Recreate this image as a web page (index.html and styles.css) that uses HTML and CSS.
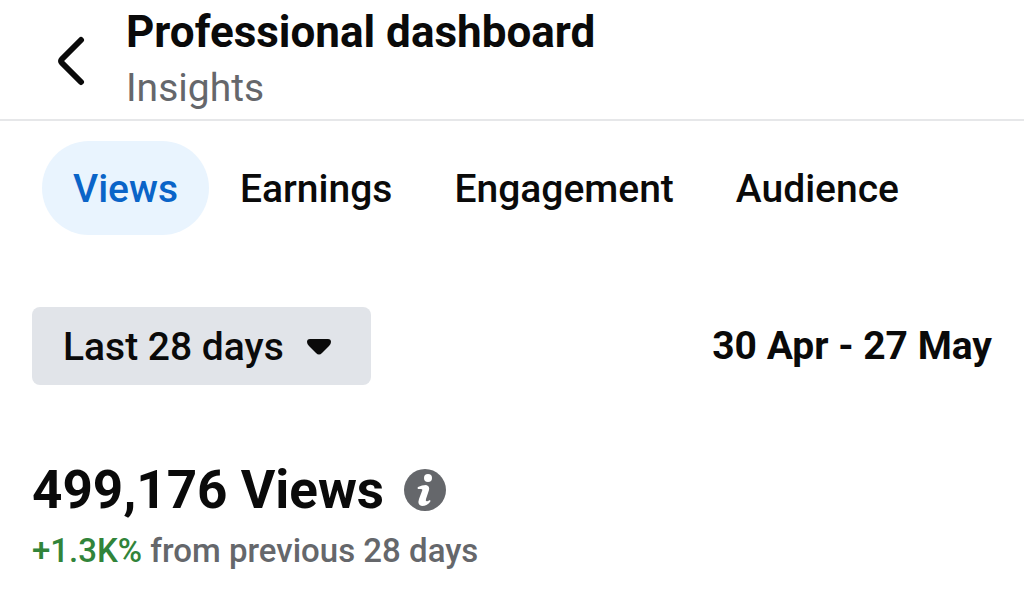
FILE: index.html
```
<!DOCTYPE html>
<html lang="en">
<head>
    <meta charset="UTF-8">
    <meta name="viewport" content="width=device-width, initial-scale=1.0">
    <title>Professional dashboard</title>
    <link rel="stylesheet" href="styles.css">
</head>
<body>
    <header class="header">
        <button class="back" aria-label="Back">
            <svg width="28" height="52" viewBox="0 0 28 52" fill="none" stroke="#0a0a0a" stroke-width="6" stroke-linecap="round" stroke-linejoin="round">
                <path d="M23 6 4 25q-2 2 0 4l19 19"/>
            </svg>
        </button>
        <div class="titles">
            <h1 class="title">Professional dashboard</h1>
            <p class="subtitle">Insights</p>
        </div>
    </header>

    <nav class="tabs">
        <button class="tab active">Views</button>
        <button class="tab">Earnings</button>
        <button class="tab">Engagement</button>
        <button class="tab">Audience</button>
    </nav>

    <main class="content">
        <div class="period">
            <button class="range">
                Last 28 days
                <svg width="24" height="16" viewBox="0 0 24 16" fill="#0a0a0a">
                    <path d="M3 0h18q3 0 3 3 0 2-2 4l-7 7q-3 3-6 0L2 7Q0 5 0 3q0-3 3-3z"/>
                </svg>
            </button>
            <span class="dates">30 Apr - 27 May</span>
        </div>

        <section class="summary">
            <div class="total">
                <h2 class="count">499,176 Views</h2>
                <button class="info" aria-label="About views">
                    <svg width="42" height="42" viewBox="0 0 42 42">
                        <circle cx="21" cy="21" r="21" fill="#65676b"/>
                        <circle cx="24" cy="9" r="4" fill="#fff"/>
                        <path d="M14 18q4-2 8-2 4 1 3 5l-3 9q-1 3 2 2l2-1q1 1 0 2-3 4-8 4-5-1-3-7l3-8q1-2-1-2h-3q-1-1 0-2z" fill="#fff"/>
                    </svg>
                </button>
            </div>
            <p class="change"><span class="up">+1.3K%</span> from previous 28 days</p>
        </section>
    </main>
</body>
</html>
```
FILE: styles.css
```
* {
    box-sizing: border-box;
}

body {
    margin: 0;
    font-family: Roboto, sans-serif;
    background-color: #fff;
    color: #0a0a0a;
}

h1, h2, p {
    margin: 0;
}

button {
    border: none;
    padding: 0;
    background: none;
    font: inherit;
    color: inherit;
    cursor: pointer;
}

svg {
    display: block;
}

.header {
    display: flex;
    align-items: center;
    gap: 40px;
    padding: 4px 32px 3px 58px;
    border-bottom: 2px solid #e6e7e9;
}

.title {
    font-size: 44px;
    line-height: 56px;
    font-weight: 700;
}

.subtitle {
    font-size: 39px;
    line-height: 56px;
    color: #65676b;
}

.tabs {
    display: flex;
    padding: 20px 42px;
}

.tab {
    padding: 2px 31px 0;
    border-radius: 48px;
    font-size: 39px;
    line-height: 92px;
    font-weight: 500;
}

.tab.active {
    background-color: #e9f4fe;
    color: #0a64c8;
}

.content {
    padding: 52px 32px 32px;
}

.period {
    display: flex;
    align-items: center;
    justify-content: space-between;
}

.range {
    display: flex;
    align-items: center;
    gap: 23px;
    padding: 2px 40px 0 31px;
    border-radius: 8px;
    background-color: #e1e4e9;
    font-size: 39px;
    line-height: 76px;
    font-weight: 500;
}

.dates {
    font-size: 39px;
    font-weight: 700;
}

.summary {
    padding-top: 73px;
}

.total {
    display: flex;
    align-items: center;
    gap: 20px;
}

.count {
    font-size: 53px;
    line-height: 64px;
    font-weight: 700;
}

.change {
    font-size: 33px;
    line-height: 58px;
    font-weight: 500;
    color: #65676b;
}

.up {
    color: #31843a;
}
```
